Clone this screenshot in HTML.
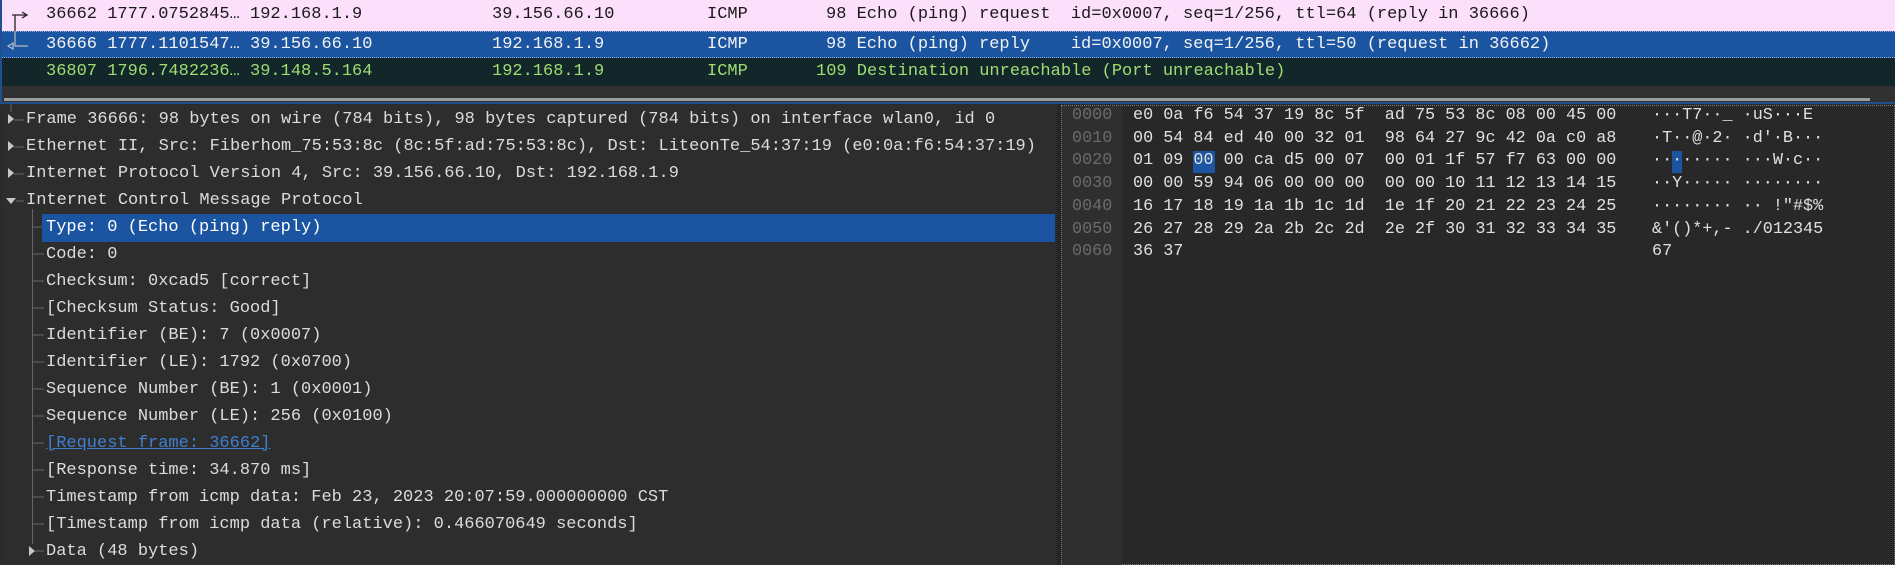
<!DOCTYPE html>
<html><head><meta charset="utf-8"><style>
*{margin:0;padding:0;box-sizing:border-box}
body{width:1895px;height:565px;overflow:hidden;background:#2b2b2b;font-family:"Liberation Mono",monospace;font-size:17px;position:relative}
.a{position:absolute;white-space:pre}
.row{position:absolute;left:0;width:1895px}
.t{position:absolute;white-space:pre;color:#dcdcdc;line-height:27px}
.h{position:absolute;white-space:pre;line-height:22.7px;font-size:16.8px}
</style></head><body>
<!-- top pane -->
<div class="row" style="top:0;height:31px;background:#fbdffb"></div>
<div class="row" style="top:31px;height:27px;background:#1b55a1;border-top:1px dotted #8fa9d0;border-bottom:1px dotted #8fa9d0"></div>
<div class="row" style="top:58px;height:28px;background:#132629"></div>
<div class="row" style="top:86px;height:18px;background:#313131"></div>
<div class="a" style="left:4px;top:98px;width:1866px;height:3px;background:#9c9c9c"></div>
<div class="a" style="left:0;top:0;width:2px;height:104px;background:#1f4f8f"></div>
<div class="a" style="left:0;top:102px;width:1895px;height:2px;background:#1f4f8f"></div>
<svg class="a" style="left:0;top:0" width="40" height="60"><path d="M12 15H26M22 12l5 3-5 3M15 15V46M15 46H28M13 43l-5 3 5 3" stroke="#222" stroke-width="1.3" fill="none"/><path d="M15 31V46H28M8 46l5-3v6z" stroke="#b9c4d6" stroke-width="1.2" fill="none"/></svg>
<div class="a" style="top:0;line-height:30px;color:#1a1a1a;left:46px">36662 1777.0752845… 192.168.1.9</div>
<div class="a" style="top:0;line-height:30px;color:#1a1a1a;left:492px">39.156.66.10</div>
<div class="a" style="top:0;line-height:30px;color:#1a1a1a;left:707px">ICMP</div>
<div class="a" style="top:0;line-height:30px;color:#1a1a1a;left:826px">98 Echo (ping) request  id=0x0007, seq=1/256, ttl=64 (reply in 36666)</div>
<div class="a" style="top:31px;line-height:27px;color:#f2f2f2;left:46px">36666 1777.1101547… 39.156.66.10</div>
<div class="a" style="top:31px;line-height:27px;color:#f2f2f2;left:492px">192.168.1.9</div>
<div class="a" style="top:31px;line-height:27px;color:#f2f2f2;left:707px">ICMP</div>
<div class="a" style="top:31px;line-height:27px;color:#f2f2f2;left:826px">98 Echo (ping) reply    id=0x0007, seq=1/256, ttl=50 (request in 36662)</div>
<div class="a" style="top:58px;line-height:28px;color:#9fdd72;left:46px">36807 1796.7482236… 39.148.5.164</div>
<div class="a" style="top:58px;line-height:28px;color:#9fdd72;left:492px">192.168.1.9</div>
<div class="a" style="top:58px;line-height:28px;color:#9fdd72;left:707px">ICMP</div>
<div class="a" style="top:58px;line-height:28px;color:#9fdd72;left:816px">109 Destination unreachable (Port unreachable)</div>
<!-- tree pane -->
<div class="a" style="left:2px;top:105px;width:1055px;height:460px;background:#2d2d2d"></div>
<div class="a" style="left:1057px;top:104px;width:4px;height:461px;background:#262626"></div>
<div class="a" style="left:42px;top:214px;width:1013px;height:28px;background:#1b55a1"></div>
<svg class="a" style="left:0;top:104px" width="60" height="461"><g fill="#c8c8c8"><path d="M8 10l6 5-6 5z"/><path d="M8 37l6 5-6 5z"/><path d="M8 64l6 5-6 5z"/><path d="M6 94l10 0-5 6z"/><path d="M29 442l6 5-6 5z"/></g><g stroke="#666" stroke-width="1" fill="none"><path d="M11 0V8M14 16H24M14 43H24M14 70H24M16 97H24"/><path d="M32.5 105V440"/><path d="M32 123H42M32 150H44M32 177H44M32 204H44M32 231H44M32 258H44M32 285H44M32 312H44M32 339H44M32 366H44M32 393H44M32 420H44M35 447H44"/></g></svg>
<div class="t" style="left:26px;top:106px">Frame 36666: 98 bytes on wire (784 bits), 98 bytes captured (784 bits) on interface wlan0, id 0</div>
<div class="t" style="left:26px;top:133px">Ethernet II, Src: Fiberhom_75:53:8c (8c:5f:ad:75:53:8c), Dst: LiteonTe_54:37:19 (e0:0a:f6:54:37:19)</div>
<div class="t" style="left:26px;top:160px">Internet Protocol Version 4, Src: 39.156.66.10, Dst: 192.168.1.9</div>
<div class="t" style="left:26px;top:187px">Internet Control Message Protocol</div>
<div class="t" style="left:46px;top:214px;color:#fff">Type: 0 (Echo (ping) reply)</div>
<div class="t" style="left:46px;top:241px">Code: 0</div>
<div class="t" style="left:46px;top:268px">Checksum: 0xcad5 [correct]</div>
<div class="t" style="left:46px;top:295px">[Checksum Status: Good]</div>
<div class="t" style="left:46px;top:322px">Identifier (BE): 7 (0x0007)</div>
<div class="t" style="left:46px;top:349px">Identifier (LE): 1792 (0x0700)</div>
<div class="t" style="left:46px;top:376px">Sequence Number (BE): 1 (0x0001)</div>
<div class="t" style="left:46px;top:403px">Sequence Number (LE): 256 (0x0100)</div>
<div class="t" style="left:46px;top:430px;color:#3f7fd0;text-decoration:underline">[Request frame: 36662]</div>
<div class="t" style="left:46px;top:457px">[Response time: 34.870 ms]</div>
<div class="t" style="left:46px;top:484px">Timestamp from icmp data: Feb 23, 2023 20:07:59.000000000 CST</div>
<div class="t" style="left:46px;top:511px">[Timestamp from icmp data (relative): 0.466070649 seconds]</div>
<div class="t" style="left:46px;top:538px">Data (48 bytes)</div>
<!-- hex pane -->
<div class="a" style="left:1061px;top:105px;width:834px;height:460px;background:#282828;border:1px dotted #777"></div>
<div class="a" style="left:1062px;top:106px;width:60px;height:459px;background:#2f2f2f"></div>
<div class="a" style="left:1193px;top:151px;width:22px;height:22px;background:#1b55a1"></div>
<div class="a" style="left:1672px;top:151px;width:10px;height:22px;background:#1b55a1"></div>
<div class="h" style="left:1072px;top:105px;color:#6b6b6b">0000
0010
0020
0030
0040
0050
0060</div>
<div class="h" style="left:1133px;top:105px;color:#e0e0e0">e0 0a f6 54 37 19 8c 5f  ad 75 53 8c 08 00 45 00
00 54 84 ed 40 00 32 01  98 64 27 9c 42 0a c0 a8
01 09 00 00 ca d5 00 07  00 01 1f 57 f7 63 00 00
00 00 59 94 06 00 00 00  00 00 10 11 12 13 14 15
16 17 18 19 1a 1b 1c 1d  1e 1f 20 21 22 23 24 25
26 27 28 29 2a 2b 2c 2d  2e 2f 30 31 32 33 34 35
36 37</div>
<div class="h" style="left:1652px;top:105px;color:#e0e0e0">···T7··_ ·uS···E
·T··@·2· ·d'·B···
········ ···W·c··
··Y····· ········
········ ·· !"#$%
&amp;'()*+,- ./012345
67</div>
</body></html>
